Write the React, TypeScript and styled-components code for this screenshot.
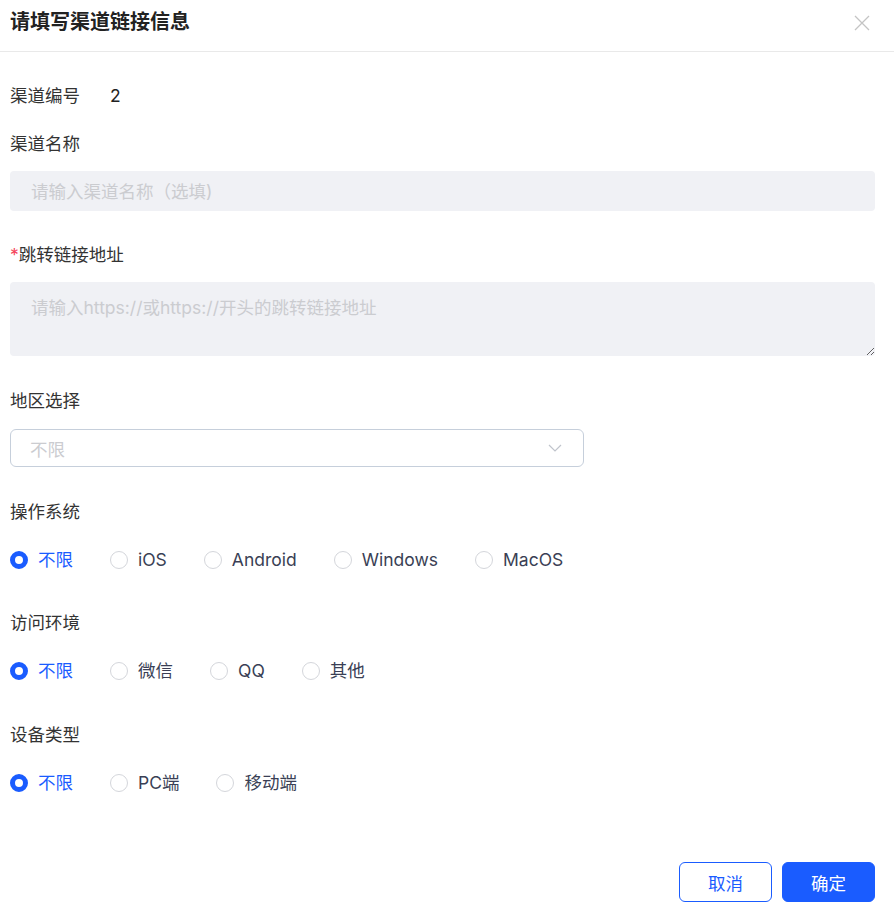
import React from 'react';
import styled, {createGlobalStyle} from 'styled-components';

const GlobalStyle = createGlobalStyle`
  body {
    margin: 0;
    background: #fff;
    font-family: "Inter", "Noto Sans CJK SC", sans-serif;
    color: #333;
  }
`;

type Option = {label: string; checked?: boolean};

const osOptions: Option[] = [
    {label: '不限', checked: true},
    {label: 'iOS'},
    {label: 'Android'},
    {label: 'Windows'},
    {label: 'MacOS'},
];
const envOptions: Option[] = [
    {label: '不限', checked: true},
    {label: '微信'},
    {label: 'QQ'},
    {label: '其他'},
];
const deviceOptions: Option[] = [
    {label: '不限', checked: true},
    {label: 'PC端'},
    {label: '移动端'},
];

function RadioRow({options}: {options: Option[]}) {
    return (
        <RadioGroup>
            {options.map(o => (
                <RadioItem key={o.label} $checked={!!o.checked}>
                    <RadioDot $checked={!!o.checked}/>
                    <span>{o.label}</span>
                </RadioItem>
            ))}
        </RadioGroup>
    );
}

export default function App() {
    return (
        <Dialog>
            <GlobalStyle/>
            <Header>
                <Title>请填写渠道链接信息</Title>
                <Close>
                    <svg width="16" height="16" viewBox="0 0 16 16">
                        <path d="M1 1L15 15M15 1L1 15" stroke="#c4c4c4" strokeWidth="1.3" fill="none"/>
                    </svg>
                </Close>
            </Header>
            <Body>
                <Field $top={32}>
                    <InlineRow>
                        <Label>渠道编号</Label>
                        <Value>2</Value>
                    </InlineRow>
                </Field>
                <Field $top={24}>
                    <Label>渠道名称</Label>
                    <Input placeholder="请输入渠道名称（选填)"/>
                </Field>
                <Field $top={32}>
                    <Label><Required>*</Required>跳转链接地址</Label>
                    <TextArea placeholder="请输入https://或https://开头的跳转链接地址"/>
                </Field>
                <Field $top={33}>
                    <Label>地区选择</Label>
                    <Select>
                        <span>不限</span>
                        <svg width="14" height="8" viewBox="0 0 14 8">
                            <path d="M1 1L7 7L13 1" stroke="#c0c4cc" strokeWidth="1.2" fill="none"/>
                        </svg>
                    </Select>
                </Field>
                <Field $top={33}>
                    <Label>操作系统</Label>
                    <RadioRow options={osOptions}/>
                </Field>
                <Field $top={39}>
                    <Label>访问环境</Label>
                    <RadioRow options={envOptions}/>
                </Field>
                <Field $top={40}>
                    <Label>设备类型</Label>
                    <RadioRow options={deviceOptions}/>
                </Field>
            </Body>
            <Footer>
                <Button>取消</Button>
                <Button $primary>确定</Button>
            </Footer>
        </Dialog>
    );
}

const Dialog = styled.div`
  width: 894px;
  height: 910px;
  background: #fff;
  display: flex;
  flex-direction: column;
`;

const Header = styled.div`
  height: 52px;
  border-bottom: 1px solid #e9e9e9;
  display: flex;
  justify-content: space-between;
  align-items: flex-start;
  padding: 10px 24px 0 10px;
  box-sizing: border-box;
`;

const Title = styled.div`
  font-size: 20px;
  line-height: 24px;
  font-weight: 700;
  color: #222;
`;

const Close = styled.div`
  width: 16px;
  height: 16px;
  margin-top: 5px;
`;

const Body = styled.div`
  padding: 0 19px 0 10px;
  display: flex;
  flex-direction: column;
`;

const Field = styled.div<{$top: number}>`
  margin-top: ${p => p.$top}px;
  display: flex;
  flex-direction: column;
`;

const InlineRow = styled.div`
  display: flex;
  align-items: center;
  gap: 30px;
`;

const Label = styled.div`
  font-size: 17.5px;
  line-height: 24px;
  color: #333;
`;

const Value = styled.div`
  font-size: 17.5px;
  line-height: 24px;
  color: #222;
`;

const Required = styled.span`
  color: #f5455c;
`;

const Input = styled.input`
  margin-top: 15px;
  height: 40px;
  border: none;
  border-radius: 4px;
  background: #f0f1f5;
  padding: 0 21px;
  font-size: 17.5px;
  font-family: inherit;
  outline: none;

  &::placeholder {
    color: #cbccd0;
  }
`;

const TextArea = styled.textarea`
  margin-top: 15px;
  height: 74px;
  border: none;
  border-radius: 4px;
  background: #f0f1f5;
  padding: 14px 21px;
  box-sizing: border-box;
  font-size: 17.5px;
  line-height: 24px;
  font-family: inherit;
  outline: none;
  resize: vertical;

  &::placeholder {
    color: #cbccd0;
  }
`;

const Select = styled.div`
  margin-top: 16px;
  width: 574px;
  height: 38px;
  box-sizing: border-box;
  border: 1px solid #c6cfdb;
  border-radius: 6px;
  display: flex;
  align-items: center;
  justify-content: space-between;
  padding: 0 21px 0 19px;
  font-size: 17.5px;
  color: #cbccd0;
`;

const RadioGroup = styled.div`
  margin-top: 24px;
  display: flex;
  align-items: center;
  gap: 37px;
`;

const RadioItem = styled.label<{$checked: boolean}>`
  display: flex;
  align-items: center;
  gap: 10px;
  font-size: 17.5px;
  line-height: 24px;
  color: ${p => p.$checked ? '#1a5cff' : '#3a3f55'};
`;

const RadioDot = styled.span<{$checked: boolean}>`
  width: 18px;
  height: 18px;
  box-sizing: border-box;
  border-radius: 50%;
  background: #fff;
  border: ${p => p.$checked ? '5px solid #1a5cff' : '1px solid #d4d6db'};
`;

const Footer = styled.div`
  margin-top: auto;
  margin-bottom: 8px;
  padding-right: 19px;
  display: flex;
  justify-content: flex-end;
  gap: 10px;
`;

const Button = styled.button<{$primary?: boolean}>`
  width: 93px;
  height: 40px;
  border-radius: 6px;
  font-size: 17.5px;
  font-family: inherit;
  border: 1px solid #1a5cff;
  background: ${p => p.$primary ? '#1a5cff' : '#fff'};
  color: ${p => p.$primary ? '#fff' : '#1a5cff'};
`;
